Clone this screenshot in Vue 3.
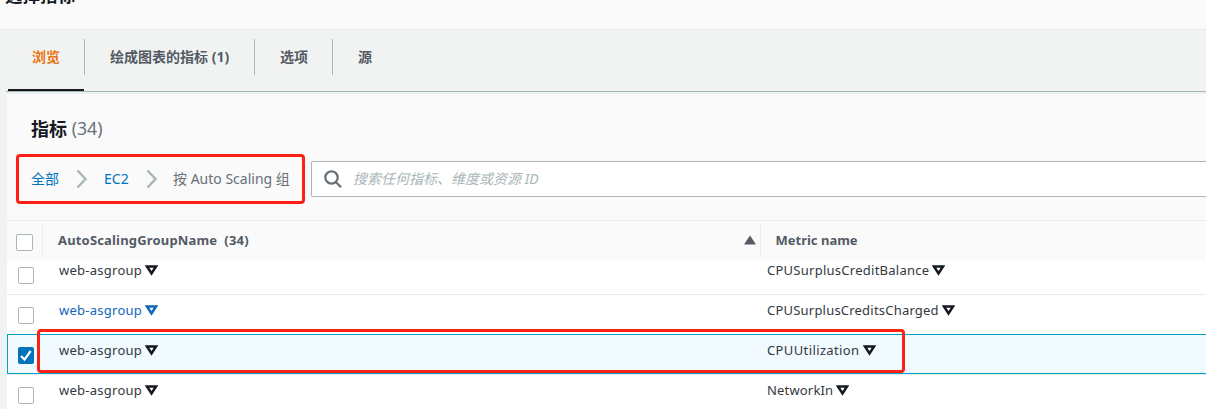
<script setup>
const tabs = [
  { label: '浏览', kind: 'first' },
  { label: '绘成图表的指标 (1)', kind: 'second' },
  { label: '选项', kind: 'third' },
  { label: '源', kind: 'fourth' },
]
const rows = [
  { metric: 'CPUSurplusCreditBalance', kind: 'balance' },
  { metric: 'CPUSurplusCreditsCharged', kind: 'charged', link: true },
  { metric: 'CPUUtilization', kind: 'utilization', selected: true },
  { metric: 'NetworkIn', kind: 'network' },
]
</script>

<template>
  <div class="page">
    <header class="title"><span>选择指标</span></header>
    <nav class="tabs">
      <div v-for="t in tabs" :key="t.label" class="tab" :class="t.kind"><span>{{ t.label }}</span></div>
    </nav>
    <main class="panel">
      <h2 class="heading">指标 <span>(34)</span></h2>
      <div class="filter">
        <div class="crumbs">
          <a class="all">全部</a>
          <svg class="chev" width="12" height="20" viewBox="0 0 12 20"><path d="M1.5 1.5 9.5 10 1.5 18.5" /></svg>
          <a class="ec2">EC2</a>
          <svg class="chev" width="12" height="20" viewBox="0 0 12 20"><path d="M1.5 1.5 9.5 10 1.5 18.5" /></svg>
          <span class="current">按 Auto Scaling 组</span>
        </div>
        <div class="search">
          <svg width="18" height="19" viewBox="0 0 18 19"><circle cx="7.5" cy="7.5" r="6.2" /><path d="m12 12.2 5 5.1" /></svg>
          <span>搜索任何指标、维度或资源 ID</span>
        </div>
      </div>
      <div class="thead">
        <i class="box"></i>
        <div class="th name"><span>AutoScalingGroupName&nbsp; (34)</span>
          <svg width="12" height="10" viewBox="0 0 12 10"><path d="M6 .5 12 9.5H0Z" /></svg>
        </div>
        <div class="th metric"><span>Metric name</span></div>
      </div>
      <div class="tbody">
        <div v-for="r in rows" :key="r.metric" class="row" :class="{ selected: r.selected }">
          <i class="box" :class="{ checked: r.selected }">
            <svg v-if="r.selected" width="16" height="17" viewBox="0 0 16 17"><path d="m3 9 3.5 3.6L12.7 4" /></svg>
          </i>
          <div class="cell group" :class="{ link: r.link }"><span class="text">web-asgroup</span>
            <svg class="tri" width="13" height="11" viewBox="0 0 13 11"><path d="M2 1.5h9L6.5 8.5Z" /></svg>
          </div>
          <div class="cell"><span class="text" :class="r.kind">{{ r.metric }}</span>
            <svg class="tri" width="13" height="11" viewBox="0 0 13 11"><path d="M2 1.5h9L6.5 8.5Z" /></svg>
          </div>
        </div>
      </div>
    </main>
    <div class="mark mark-path"></div>
    <div class="mark mark-row"></div>
  </div>
</template>

<style>
body { margin: 0; overflow: hidden; }
</style>

<style scoped>
* { box-sizing: border-box; }
.page { position: relative; width: 1206px; height: 409px; overflow: hidden; background: #f1f3f3; color: #16191f; font: 14px/20px "Noto Sans", "Noto Sans CJK SC", sans-serif; white-space: nowrap; }
.title { height: 30px; background: #fafafa; border-bottom: 1px solid #e8ebeb; padding-left: 5px; font-size: 17.5px; font-weight: 700; }
.title span { display: block; height: 24px; line-height: 24px; transform: translateY(-17px); }
.tabs { display: flex; height: 62px; margin-left: 6px; border-bottom: 1px solid #a5b4b4; padding-left: 2px; color: #545b64; font-weight: 700; }
.tab { position: relative; height: 61px; padding: 17px 0 0 25px; }
.tab:not(:last-child)::after { content: ""; position: absolute; right: 0; top: 9px; width: 1px; height: 36px; background: #aab7b8; }
.first { width: 77px; padding-left: 24px; color: #ec7211; }
.first::before { content: ""; position: absolute; left: 0; bottom: 0; width: 76px; height: 2px; background: #16191f; }
.second { width: 170px; }
.third { width: 78px; }
.panel { margin: 1px 0 0 7px; height: 316px; background: #fafafa; border-top: 1px solid #eaeded; }
.heading { margin: 0; padding: 23px 0 0 24px; height: 67px; font-size: 18px; line-height: 24px; }
.heading span { position: relative; top: -1px; color: #687078; font-weight: 400; font-size: 17.7px; }
.filter { display: flex; height: 36px; }
.crumbs { display: flex; align-items: center; width: 304px; padding-left: 24px; color: #687078; }
.crumbs a { color: #0073bb; }
.all { width: 45px; }
.ec2 { width: 42px; margin-left: 16px; }
.current { margin-left: 15px; }
.chev { fill: none; stroke: #aab7b8; stroke-width: 2.5; flex: none; }
.search { flex: 1; display: flex; align-items: center; border: 1px solid #aab7b8; border-right: 0; border-radius: 2px 0 0 2px; background: #fff; padding-left: 12px; }
.search svg { fill: none; stroke: #687078; stroke-width: 2.3; margin-right: 11px; }
.search span { color: #aab7b8; font-style: italic; }
.thead { position: relative; z-index: 1; display: flex; height: 40px; margin-top: 23px; border-top: 1px solid #eaeded; background: #fafafa; color: #545b64; font-weight: 700; font-size: 13px; }
.box { display: block; flex: none; width: 17px; height: 17px; border: 1px solid #aab7b8; border-radius: 2px; background: #fff; }
.thead .box { margin: 13px 9px 0; }
.th { display: flex; align-items: center; height: 30px; margin-top: 4px; border-left: 1px solid #eaeded; padding-left: 15px; }
.name { width: 718px; justify-content: space-between; padding-right: 4px; letter-spacing: .17px; }
.metric { padding-left: 14.5px; }
.name svg { fill: #545b64; }
.tbody { margin-top: -5px; background: #fff; }
.row { display: flex; height: 40px; border-bottom: 1px solid #eaeded; font-size: 13px; }
.row .box { width: 16px; margin: 12px 0 0 11px; }
.row.selected { height: 40px; margin: -1px 0 1px; border: 1px solid #00a1c9; border-right: 0; background: #f1faff; box-shadow: 0 1px #eaeded; }
.selected .box { margin-left: 10px; }
.box.checked { background: #0073bb; border: 0; }
.checked svg { display: block; fill: none; stroke: #fff; stroke-width: 2.2; }
.cell { display: flex; align-items: center; height: 20px; margin-top: 5px; color: #16191f; }
.group { width: 708px; margin-left: 25px; }
.text { color: #333840; letter-spacing: .26px; }
.charged { letter-spacing: .21px; }
.utilization { letter-spacing: .38px; }
.network { letter-spacing: .17px; }
.link, .link .text { color: #1166bb; }
.tri { margin-left: 3px; fill: #fff; stroke: currentColor; stroke-width: 2.5; }
.mark { position: absolute; border: 3px solid #ff2015; border-radius: 4px; z-index: 2; }
.mark-path { left: 16px; top: 154px; width: 289px; height: 50px; }
.mark-row { left: 37px; top: 329px; width: 868px; height: 44px; }
</style>
